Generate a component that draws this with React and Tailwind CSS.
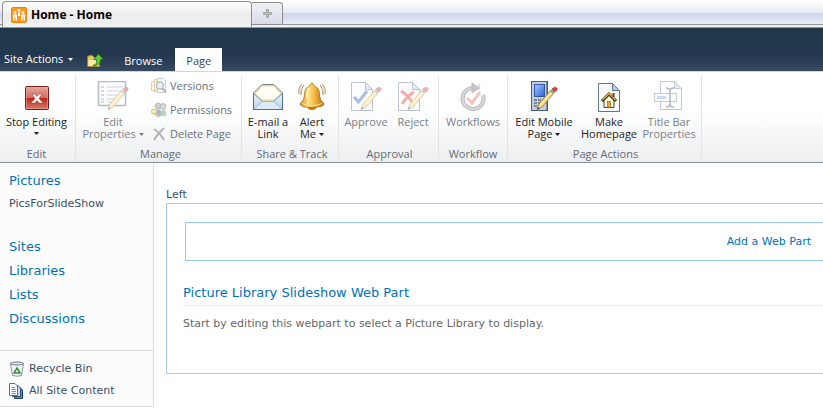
import React from 'react';

const Pencil = () => (
  <g>
    <path d="M13 23 L25 9 L28 12 L16 26 L11 28.500 Z" fill="#f9dc80" stroke="#9a7226" strokeWidth=".8" />
    <path d="M14 24 L26 10.500" stroke="#fff3b5" strokeWidth="1" />
    <path d="M24 10 L26 8 L29 11 L27 13 Z" fill="#7fa594" />
    <path d="M26 8 Q28 5 31 7 Q32 9 29 11 Z" fill="#d8433f" stroke="#8f2a2a" strokeWidth=".5" />
    <path d="M11 28.500 L12 26 L13.500 27.500 Z" fill="#333" />
  </g>
);

const PageSheet = () => (
  <g>
    <path d="M5.500 2.500 H19.500 L26.500 9.500 V30.500 H5.500 Z" fill="#f8fbff" stroke="#5d7390" />
    <path d="M19.500 2.500 V9.500 H26.500 Z" fill="#b9d0ec" stroke="#5d7390" />
  </g>
);

const StopIcon = () => (
  <svg width="32" height="32" viewBox="0 0 32 32">
    <defs>
      <linearGradient id="stop" x1="0" y1="0" x2="0" y2="1">
        <stop offset="0" stopColor="#e8a9a0" />
        <stop offset=".5" stopColor="#d36a5c" />
        <stop offset=".52" stopColor="#bc2a18" />
        <stop offset="1" stopColor="#dd7b6b" />
      </linearGradient>
    </defs>
    <rect x="4.500" y="5.500" width="23" height="23" rx="1" fill="url(#stop)" stroke="#6e211b" />
    <rect x="5.500" y="6.500" width="21" height="21" fill="none" stroke="#eba79d" strokeOpacity=".6" />
    <path d="M11 13 H14 L16 15.500 L18 13 H21 L18 17.500 L22 22 H18 L16 19.500 L14 22 H10 L14 17.500 Z" fill="#fff" stroke="#8d3329" strokeWidth=".5" />
  </svg>
);

const EditPropertiesIcon = () => (
  <svg width="32" height="32" viewBox="0 0 32 32" opacity=".42">
    <rect x="1.500" y=".5" width="27" height="24" fill="#f7faff" stroke="#49617f" strokeWidth="1.500" />
    <path d="M4 6 H7 M4 10 H7 M4 14 H7 M4 18 H7 M4 21 H7" stroke="#3f5672" />
    <path d="M10 6 H25 M10 10 H24 M10 14 H21 M10 18 H18 M10 21 H15" stroke="#8498b3" />
    <Pencil />
  </svg>
);

const MailIcon = () => (
  <svg width="32" height="32" viewBox="0 0 32 32">
    <defs>
      <linearGradient id="mail" x1="0" y1="0" x2="0" y2="1">
        <stop offset="0" stopColor="#edf5fb" />
        <stop offset="1" stopColor="#b4d2ea" />
      </linearGradient>
    </defs>
    <path d="M1.500 12 L10 3.500 H22 L30.500 12 V28.500 H1.500 Z" fill="#efe2b8" stroke="#7d7f7a" />
    <path d="M3 12.500 L10.500 5 H21.500 L29 12.500 L22 19 H10 Z" fill="#fffdf4" stroke="#d3c498" strokeWidth=".6" />
    <path d="M1.500 12.500 L10.500 20.500 H21.500 L30.500 12.500 V28.500 H1.500 Z" fill="url(#mail)" stroke="#5e87aa" strokeWidth=".8" />
    <path d="M2 28 L10.500 20.500 H21.500 L30 28" fill="#dcebf7" stroke="#8fb1ce" strokeWidth=".7" />
    <path d="M1.500 12 V28.500 H30.500 V12" fill="none" stroke="#47749a" />
  </svg>
);

const BellIcon = () => (
  <svg width="32" height="32" viewBox="0 0 32 32">
    <defs>
      <linearGradient id="bell" x1="0" y1="0" x2="1" y2="0">
        <stop offset="0" stopColor="#d08a1c" />
        <stop offset=".35" stopColor="#ffe48a" />
        <stop offset=".65" stopColor="#eeb035" />
        <stop offset="1" stopColor="#b26d10" />
      </linearGradient>
    </defs>
    <path d="M8 4 Q4 8 5 14 M5.500 3.500 Q1.500 8 3 13 M24 4 Q28 8 27 14 M26.500 3.500 Q30.500 8 29 13" fill="none" stroke="#b58a4c" />
    <ellipse cx="16" cy="26" rx="4.500" ry="3" fill="#c27f18" />
    <path d="M13.500 5 Q16 -1 18.500 5 Q23.500 7 23.500 13 Q23.500 19 28 22.500 Q28 26.500 16 26.500 Q4 26.500 4 22.500 Q8.500 19 8.500 13 Q8.500 7 13.500 5 Z" fill="url(#bell)" stroke="#9b6415" strokeWidth=".7" />
    <path d="M6 22.500 Q16 26.500 26 22.500" fill="none" stroke="#ffdf82" />
    <path d="M13 7.500 Q11 10 11 17" fill="none" stroke="#fff6c7" strokeWidth="1.500" />
  </svg>
);

const ApproveIcon = () => (
  <svg width="32" height="32" viewBox="0 0 32 32" opacity=".42">
    <g transform="translate(-4 -1)"><PageSheet /></g>
    <path d="M4 16 L8.500 21 L17 10" fill="none" stroke="#3264d8" strokeWidth="3" />
    <Pencil />
  </svg>
);

const RejectIcon = () => (
  <svg width="32" height="32" viewBox="0 0 32 32" opacity=".42">
    <g transform="translate(-4 -1)"><PageSheet /></g>
    <path d="M4 10 Q11 14 16 22 M17 11 Q10 15 5 23" fill="none" stroke="#e2402b" strokeWidth="3" />
    <Pencil />
  </svg>
);

const WorkflowIcon = () => (
  <svg width="32" height="32" viewBox="0 0 32 32" opacity=".5">
    <path d="M17 7 A10.500 10.500 0 1 0 26 14" fill="none" stroke="#70747a" strokeWidth="4" />
    <path d="M17 7 A10.500 10.500 0 1 0 26 14" fill="none" stroke="#b5b8bb" strokeWidth="2" />
    <path d="M15 2 L22 7 L15 12 Z M22 3 V9" fill="#8a8d92" stroke="#70747a" />
    <path d="M10 17 L15 22 L23 11" fill="none" stroke="#f08a7c" strokeWidth="3" />
  </svg>
);

const MobileIcon = () => (
  <svg width="32" height="32" viewBox="0 0 32 32">
    <defs>
      <linearGradient id="screen" x1="0" y1="0" x2="1" y2="1">
        <stop offset="0" stopColor="#a9caff" />
        <stop offset="1" stopColor="#2a60d6" />
      </linearGradient>
    </defs>
    <rect x="3.500" y=".5" width="16" height="29" fill="#c3cedb" stroke="#475f7d" />
    <path d="M18.500 1 V29" stroke="#7d8ea4" />
    <rect x="6.500" y="3.500" width="10" height="12" fill="url(#screen)" stroke="#2f57ab" />
    <path d="M6 19 H9 M10 19 H13 M14 19 H17 M6 22 H9 M10 22 H13 M14 22 H17 M6 25 H9 M10 25 H13" stroke="#75869d" strokeWidth="2" />
    <g transform="translate(-2 0)"><Pencil /></g>
  </svg>
);

const HomepageIcon = () => (
  <svg width="32" height="32" viewBox="0 0 32 32">
    <PageSheet />
    <path d="M11 19 V26.500 H21 V19 L16 14 Z" fill="#fffbe8" stroke="#45433c" />
    <path d="M9 20 L16 13 L23 20" fill="none" stroke="#332914" strokeWidth="3" />
    <path d="M9.500 19 L16 12.500 L22.500 19" fill="none" stroke="#eca91c" strokeWidth="1.500" />
    <path d="M20.500 12 V16" stroke="#8c2e20" strokeWidth="2" />
    <rect x="14.500" y="20.500" width="3" height="6" fill="#e8a72c" stroke="#7b5413" strokeWidth=".6" />
  </svg>
);

const TitleBarIcon = () => (
  <svg width="32" height="32" viewBox="0 0 32 32" opacity=".38">
    <g transform="translate(2 -2)"><PageSheet /></g>
    <rect x="1.500" y="12.500" width="22" height="8" fill="#f7faff" stroke="#607490" />
    <rect x="4" y="15" width="9" height="3" fill="#6b9ce8" />
    <path d="M13 7 Q17 7 17 10 Q17 7 21 7 M17 9 V23 M13 26 Q17 26 17 23 Q17 26 21 26" fill="none" stroke="#3b4756" strokeWidth="1.500" />
  </svg>
);

const VersionsIcon = () => (
  <svg width="16" height="16" viewBox="0 0 16 16" opacity=".5">
    <path d="M.5 3.500 H6 V12.500 H.5 Z M3.500 1.500 H9 V14 H3.500 Z" fill="#ffe9ac" stroke="#c8a75d" />
    <path d="M6.500 .5 H12 L14.500 3 V14.500 H6.500 Z" fill="#fff" stroke="#8394aa" />
    <circle cx="9" cy="7.500" r="3.500" fill="#cfe5fa" stroke="#647f9d" strokeWidth="1.300" />
    <path d="M11.500 10.500 L15 14.500" stroke="#8a6b45" strokeWidth="2" />
  </svg>
);

const PermissionsIcon = () => (
  <svg width="16" height="16" viewBox="0 0 16 16" opacity=".55">
    <path d="M4 13 Q4 7.500 7.500 7.500 Q11 7.500 11 13 Q7.500 16 4 13 Z" fill="#6074d6" />
    <path d="M9.500 13 Q9.500 8 12.500 8 Q15.500 8 15.500 13 Q12.500 15.500 9.500 13 Z" fill="#7cba70" />
    <circle cx="7" cy="4" r="3" fill="#a8a8a8" stroke="#555" strokeWidth=".6" />
    <circle cx="12" cy="4.500" r="3" fill="#b5b5b5" stroke="#555" strokeWidth=".6" />
    <circle cx="3" cy="9.500" r="2.500" fill="#ffe66b" stroke="#a88b1e" />
    <path d="M4 11 L8 15" stroke="#c3a22b" strokeWidth="2" />
  </svg>
);

const DeleteIcon = () => (
  <svg width="16" height="16" viewBox="0 0 16 16">
    <path d="M3 3 Q8 6 13 14 M13 2 Q7 7 3 14" fill="none" stroke="#b1b1b1" strokeWidth="2" />
  </svg>
);

const RecycleIcon = () => (
  <svg width="16" height="16" viewBox="0 0 16 16">
    <path d="M1.500 2.500 L3.500 14.500 Q8 16 12.500 14.500 L14.500 2.500 Z" fill="#f2f6fa" stroke="#8496a9" />
    <ellipse cx="8" cy="2.500" rx="6.500" ry="1.500" fill="#dde5ed" stroke="#63778e" />
    <path d="M8 7 L11 12 H5 Z" fill="none" stroke="#3d9139" strokeWidth="1.600" />
  </svg>
);

const SiteContentIcon = () => (
  <svg width="16" height="16" viewBox="0 0 16 16">
    <path d="M5.500 4.500 H11 L13.500 7 V15.500 H5.500 Z" fill="#6d87ab" stroke="#243f66" />
    <path d="M3.500 2.500 H9 L11.500 5 V13.500 H3.500 Z" fill="#cbdcf1" stroke="#35527c" />
    <path d="M.5 .5 H6 L8.500 3 V12.500 H.5 Z" fill="#f8fbff" stroke="#53729e" />
    <path d="M2.500 4.500 H6 M2.500 6.500 H7 M2.500 8.500 H7 M2.500 10.500 H7" stroke="#7592bb" />
  </svg>
);

const FolderUpIcon = () => (
  <svg width="16" height="16" viewBox="0 0 16 16">
    <path d="M.5 13.500 V4 L2 2.500 H5.500 L7 4.500 H12.500 V13.500 Z" fill="#ebc45e" stroke="#ae822b" />
    <path d="M1.500 13 V7 H12 V13 Z" fill="#ffeaa5" />
    <path d="M6 12.500 Q10.500 11.500 9.500 6.500 H7 L11.500 1 L16 6.500 H13.500 Q14 12.500 6 12.500 Z" fill="#69ca3c" stroke="#287a1c" strokeWidth=".9" />
  </svg>
);

const SiteIcon = () => (
  <svg width="16" height="16" viewBox="0 0 16 16">
    <rect x=".5" y=".5" width="15" height="15" rx="1.500" fill="#fb9a1e" stroke="#ee8412" />
    <circle cx="4" cy="5.500" r="1.300" fill="#fff" />
    <circle cx="12" cy="5.500" r="1.300" fill="#fff" />
    <circle cx="8" cy="3.500" r="1.300" fill="#fff" />
    <path d="M2 7.500 H6 V13.500 H2 Z M10 7.500 H14 V13.500 H10 Z M7 5.500 H9 V9 H7 Z" fill="#fff" />
    <path d="M4 9.500 V14 M12 9.500 V14" stroke="#fb9a1e" />
  </svg>
);

const Arrow = ({ className = '' }) => (
  <svg width="5" height="3" viewBox="0 0 5 3" className={`inline-block align-middle ${className}`}>
    <path d="M0 0 H5 L2.500 3 Z" fill="currentColor" />
  </svg>
);

const RibbonGroup = ({ label, className = '', children }) => (
  <section className={`flex shrink-0 flex-col border-r border-[#e1e3e5] ${className}`}>
    <div className="flex h-[70px] items-start">{children}</div>
    <h2 className="text-center leading-4 text-[#666b73]">{label}</h2>
  </section>
);

// Large ribbon button: 32px icon over one or two lines of text
const RibbonButton = ({ icon: Icon, lines, arrow, disabled, className = '' }) => (
  <button
    type="button"
    disabled={disabled}
    className={`flex shrink-0 flex-col items-center pt-[5px] leading-3 whitespace-nowrap ${disabled ? 'text-[#7b8087]' : 'text-[#1e1e1e]'} ${className}`}
  >
    <Icon />
    <span className="mt-[3px]">{lines[0]}</span>
    <span className="flex items-center gap-[3px]">
      {lines[1]}
      {arrow && <Arrow className={lines[1] ? '' : 'mt-1'} />}
    </span>
  </button>
);

const smallActions = [
  { label: 'Versions', icon: VersionsIcon },
  { label: 'Permissions', icon: PermissionsIcon },
  { label: 'Delete Page', icon: DeleteIcon },
];

const navLinks = ['Sites', 'Libraries', 'Lists', 'Discussions'];

const TabStrip = () => (
  <div className="flex h-7 items-end border-b border-[#979797] bg-[linear-gradient(#ffffff_0px,#e6ebf5_13px,#ced5eb_13px,#e8ebf8_24px,#969696_24px,#969696_25px,#f0f0f0_25px)] pl-[2px]">
    <button
      type="button"
      className="flex h-[26px] w-[250px] items-center gap-1 rounded-t border border-b-0 border-[#8e8e8e] bg-linear-to-b from-white via-[#ececec] to-[#f0f0f0] pl-2 text-[12px] font-bold text-black"
    >
      <SiteIcon />
      Home - Home
    </button>
    <button
      type="button"
      aria-label="New tab"
      className="mb-[2px] flex h-[23px] w-[31px] items-center justify-center rounded-tr border border-l-0 border-[#8e8e8e] bg-linear-to-b from-[#f1f1f4] to-[#d8dbe8]"
    >
      <svg width="9" height="9" viewBox="0 0 9 9">
        <path d="M3.500 .5 H5.500 V3.500 H8.500 V5.500 H5.500 V8.500 H3.500 V5.500 H.5 V3.500 H3.500 Z" fill="#bbb" stroke="#999" strokeWidth=".8" />
      </svg>
    </button>
  </div>
);

const TopBar = () => (
  <header className="flex h-11 items-end border-b border-[#d2d6dc] bg-[linear-gradient(#21374c_0px,#21374c_22px,#25384f_28px,#344a60_43px)] text-[11px] text-white">
    <button type="button" className="mb-1 ml-1 flex h-4 items-center gap-[5px] whitespace-nowrap">
      Site Actions
      <Arrow />
    </button>
    <button type="button" aria-label="Navigate up" className="mb-[2px] ml-[14px]">
      <FolderUpIcon />
    </button>
    <nav className="ml-3 flex h-[23px]">
      <a href="#browse" className="flex w-[60px] items-center justify-center pt-1 pr-1">Browse</a>
      <a href="#page" className="flex w-[47px] items-center justify-center bg-white pt-1 text-[#3b4651]">Page</a>
    </nav>
  </header>
);

const Ribbon = () => (
  <div className="flex overflow-hidden border-b border-[#8b8e97] bg-linear-to-b from-white from-40% to-[#eceef0] pt-1 text-[11px]">
    <RibbonGroup label="Edit" className="w-[76px] pr-[2px]">
      <RibbonButton icon={StopIcon} lines={['Stop Editing']} arrow className="w-full" />
    </RibbonGroup>
    <RibbonGroup label="Manage" className="w-[166px] pl-1">
      <RibbonButton icon={EditPropertiesIcon} lines={['Edit', 'Properties']} arrow disabled className="w-[66px]" />
      <ul className="ml-[5px] flex flex-col gap-1">
        {smallActions.map(({ label, icon: Icon }) => (
          <li key={label}>
            <button type="button" disabled className="flex h-5 items-center gap-[3px] whitespace-nowrap text-[#6b7077]">
              <Icon />
              {label}
            </button>
          </li>
        ))}
      </ul>
    </RibbonGroup>
    <RibbonGroup label="Share & Track" className="w-[97px] pl-1">
      <RibbonButton icon={MailIcon} lines={['E-mail a', 'Link']} className="w-11" />
      <RibbonButton icon={BellIcon} lines={['Alert', 'Me']} arrow className="w-11" />
    </RibbonGroup>
    <RibbonGroup label="Approval" className="w-[100px] pl-[2px]">
      <RibbonButton icon={ApproveIcon} lines={['Approve']} disabled className="w-[50px]" />
      <RibbonButton icon={RejectIcon} lines={['Reject']} disabled className="w-11" />
    </RibbonGroup>
    <RibbonGroup label="Workflow" className="w-[69px]">
      <RibbonButton icon={WorkflowIcon} lines={['Workflows']} disabled className="w-full" />
    </RibbonGroup>
    <RibbonGroup label="Page Actions" className="w-[194px] pl-[2px]">
      <RibbonButton icon={MobileIcon} lines={['Edit Mobile', 'Page']} arrow className="w-[68px]" />
      <RibbonButton icon={HomepageIcon} lines={['Make', 'Homepage']} className="w-[62px]" />
      <RibbonButton icon={TitleBarIcon} lines={['Title Bar', 'Properties']} disabled className="w-[58px]" />
    </RibbonGroup>
  </div>
);

const Sidebar = () => (
  <aside className="w-[154px] shrink-0 border-r border-b border-[#dbddde] bg-[#fcfcfc] text-[11px] text-[#3b4f65]">
    <nav className="flex h-[187px] flex-col pt-[6px] pl-[9px]">
      <a href="#pictures" className="text-[13px] leading-6 text-[#0072bc]">Pictures</a>
      <a href="#slideshow" className="leading-[22px]">PicsForSlideShow</a>
      <ul className="mt-5 text-[13px] leading-6 text-[#0072bc]">
        {navLinks.map((link) => (
          <li key={link}>
            <a href={`#${link.toLowerCase()}`}>{link}</a>
          </li>
        ))}
      </ul>
    </nav>
    <div className="border-t border-[#dbddde] pt-[7px] pb-1 pl-[9px] leading-[22px]">
      <a href="#recycle" className="flex items-center gap-1">
        <RecycleIcon />
        Recycle Bin
      </a>
      <a href="#content" className="flex items-center gap-1">
        <SiteContentIcon />
        All Site Content
      </a>
    </div>
  </aside>
);

const App = () => {
  return (
    <div className="bg-white font-['Open_Sans','Noto_Sans',sans-serif]">
      <TabStrip />
      <TopBar />
      <Ribbon />
      <div className="flex items-start font-['DejaVu_Sans',sans-serif]">
        <Sidebar />
        <main className="min-w-0 flex-1 pt-6 pl-3 text-[11px]">
          <h2 className="leading-4 text-[#3b4f65]">Left</h2>
          <div className="border-y border-l border-[#a3cbe3] pt-[18px] pb-[39px] pl-4">
            <div className="ml-[2px] flex h-[39px] items-center justify-end border-y border-l border-[#99c7fa] pr-3">
              <a href="#add" className="pt-[2px] text-[#0072bc]">Add a Web Part</a>
            </div>
            <h3 className="mt-5 border-b border-[#ebebeb] text-[13px] leading-6 text-[#0072bc]">
              Picture Library Slideshow Web Part
            </h3>
            <p className="mt-2 leading-5 text-[#676767]">
              Start by editing this webpart to select a Picture Library to display.
            </p>
          </div>
        </main>
      </div>
    </div>
  );
};

export default App;
